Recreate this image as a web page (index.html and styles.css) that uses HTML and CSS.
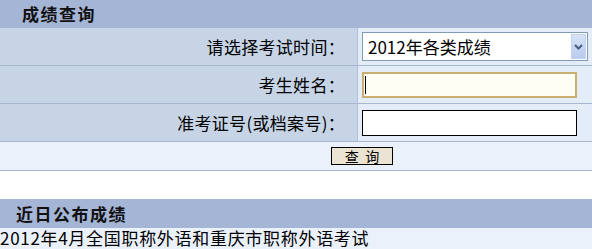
FILE: index.html
```html
<!DOCTYPE html>
<html lang="zh-CN">
<head>
    <meta charset="UTF-8">
    <title>成绩查询</title>
    <link rel="stylesheet" href="styles.css">
</head>
<body>

<div class="bar bar-query">成绩查询</div>

<form class="query" onsubmit="return false;">
    <div class="row">
        <label class="lbl" for="examTime">请选择考试时间：</label>
        <div class="val">
            <div class="select" id="examTime">
                <span>2012年各类成绩</span>
                <span class="arrow">
                    <svg width="9" height="6" viewBox="0 0 9 6"><path d="M1 1 L4.5 4.5 L8 1" fill="none" stroke="#4a5d80" stroke-width="2"/></svg>
                </span>
            </div>
        </div>
    </div>
    <div class="row">
        <label class="lbl" for="stuName">考生姓名：</label>
        <div class="val"><div class="input focus" id="stuName"><span class="caret"></span></div></div>
    </div>
    <div class="row">
        <label class="lbl" for="stuNo">准考证号(或档案号)：</label>
        <div class="val"><div class="input" id="stuNo"></div></div>
    </div>
    <div class="actions">
        <button type="submit" class="btn">查&nbsp;&nbsp;询</button>
    </div>
</form>

<div class="gap"></div>

<div class="bar bar-recent">近日公布成绩</div>
<div class="news">2012年4月全国职称外语和重庆市职称外语考试</div>

</body>
</html>
```

FILE: styles.css
```css
body {
    margin: 0;
    font-family: "Noto Sans CJK SC", "Liberation Sans", sans-serif;
    font-size: 17px;
    color: #000;
    background: #fff;
    width: 592px;
}

.bar {
    height: 28px;
    line-height: 28px;
    background-color: #a5b5d6;
    font-weight: bold;
    font-size: 17px;
    letter-spacing: 1.5px;
    color: #111;
}

.bar-query {
    padding-left: 22px;
}

.bar-recent {
    height: 29px;
    line-height: 29px;
    padding-left: 16px;
}

.row {
    display: flex;
    height: 37px;
    border-bottom: 1px solid #a7b7cf;
}

.lbl {
    width: 345px;
    padding-right: 12px;
    background-color: #c6d4e6;
    border-right: 1px solid #b3c2d8;
    display: flex;
    align-items: center;
    justify-content: flex-end;
    letter-spacing: 0.3px;
}

.val {
    flex: 1;
    background-color: #e4ecf7;
    display: flex;
    align-items: center;
    padding-left: 4px;
}

.select {
    width: 226px;
    height: 29px;
    box-sizing: border-box;
    border: 1px solid #7f9db9;
    background: #fff;
    display: flex;
    align-items: center;
    justify-content: space-between;
    padding-left: 5px;
}

.arrow {
    width: 15px;
    height: 25px;
    margin-right: 1px;
    background: linear-gradient(#d6e2f7, #b9cbee);
    border: 1px solid #c3d3ef;
    box-sizing: border-box;
    display: flex;
    align-items: center;
    justify-content: center;
}

.input {
    width: 215px;
    height: 26px;
    box-sizing: border-box;
    border: 1px solid #000;
    background: #fff;
    display: flex;
    align-items: center;
}

.input.focus {
    border: 2px solid #c9b070;
    background: #fffef4;
}

.caret {
    width: 1px;
    height: 18px;
    margin-left: 1px;
    background: #000;
}

.actions {
    height: 28px;
    background-color: #eaf1fb;
    border-bottom: 1px solid #a7b7cf;
    display: flex;
    align-items: center;
    padding-left: 331px;
}

.btn {
    width: 62px;
    height: 18px;
    padding: 0;
    border: 1px solid #000;
    background-color: #ece4d2;
    font-family: inherit;
    font-size: 14px;
    line-height: 16px;
    color: #000;
    cursor: pointer;
}

.gap {
    height: 28px;
}

.news {
    height: 21px;
    line-height: 20px;
    letter-spacing: 0.7px;
    background-color: #eaf1fb;
    white-space: nowrap;
}
```
